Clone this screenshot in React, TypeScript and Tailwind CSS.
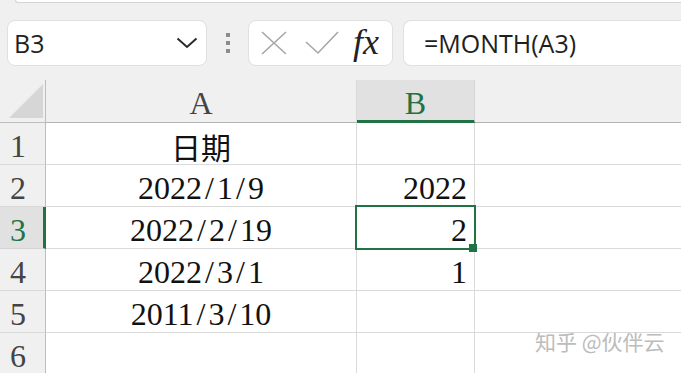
import React from "react";

const serif = { fontFamily: '"Liberation Serif", "Times New Roman", serif' };
const ui = { fontFamily: '"Open Sans", "Noto Sans", sans-serif' };
const cjk = { fontFamily: '"Noto Sans CJK SC", "Noto Sans", sans-serif' };

function DateText({ s }: { s: string }) {
  const parts = s.split("/");
  return (
    <span className="font-['Liberation_Serif',serif]">
      {parts.map((p, i) => (
        <React.Fragment key={i}>
          {i > 0 && <span className="mx-[3px]">/</span>}
          {p}
        </React.Fragment>
      ))}
    </span>
  );
}

const rows: { n: number; a?: React.ReactNode; b?: string }[] = [
  { n: 1, a: <span style={cjk} className="text-[30px] leading-none">日期</span> },
  { n: 2, a: <DateText s="2022/1/9" />, b: "2022" },
  { n: 3, a: <DateText s="2022/2/19" />, b: "2" },
  { n: 4, a: <DateText s="2022/3/1" />, b: "1" },
  { n: 5, a: <DateText s="2011/3/10" /> },
  { n: 6 },
];

export default function App() {
  return (
    <div className="relative w-[681px] h-[373px] overflow-hidden bg-[#f0f0f0] font-['Liberation_Serif',serif]">
      {/* top ribbon edge */}
      <div className="h-[3px] ml-[15px] bg-white border-b border-l border-[#d4d4d4] rounded-bl-[8px]" />

      {/* formula bar */}
      <div className="flex items-center h-[46px] mt-[17px] pl-[7px]" style={ui}>
        <div className="w-[200px] h-[46px] shrink-0 rounded-[8px] bg-white border border-[#e0e0e0] flex items-center justify-between pl-[6px] pr-[8px]">
          <span className="text-[25px] text-[#1f1f1f] leading-none">B3</span>
          <svg width="22" height="12" viewBox="0 0 22 12">
            <path d="M1.5 1.5 L11 10 L20.5 1.5" fill="none" stroke="#2a2a2a" strokeWidth="2" />
          </svg>
        </div>
        <div className="w-[41px] shrink-0 flex flex-col items-center gap-[4px]">
          <div className="w-[4px] h-[4px] bg-[#8c8c8c]" />
          <div className="w-[4px] h-[4px] bg-[#8c8c8c]" />
          <div className="w-[4px] h-[4px] bg-[#8c8c8c]" />
        </div>
        <div className="w-[145px] h-[46px] shrink-0 rounded-[8px] bg-white border border-[#e0e0e0] flex items-center pl-[12px]">
          <svg width="26" height="24" viewBox="0 0 26 24">
            <path d="M1 1 L25 23 M25 1 L1 23" fill="none" stroke="#a6a6a6" strokeWidth="1.6" />
          </svg>
          <svg width="34" height="24" viewBox="0 0 34 24" className="ml-[18px]">
            <path d="M1 11 L13 22 L33 1" fill="none" stroke="#a6a6a6" strokeWidth="1.6" />
          </svg>
          <span className="ml-[14px] text-[36px] italic leading-none text-[#222] -mt-[2px]" style={serif}>
            fx
          </span>
        </div>
        <div className="ml-[10px] flex-1 h-[46px] rounded-l-[8px] bg-white border border-r-0 border-[#e0e0e0] flex items-center pl-[20px]">
          <span className="text-[25px] text-[#1f1f1f] leading-none">=MONTH(A3)</span>
        </div>
      </div>

      {/* column headers */}
      <div className="flex h-[43px] mt-[14px]">
        <div className="w-[46px] shrink-0 border-b border-r border-[#bdbdbd] relative">
          <svg width="46" height="42" viewBox="0 0 46 42" className="absolute left-0 top-0">
            <path d="M9 38 L43 38 L43 4 Z" fill="#d6d6d6" />
          </svg>
        </div>
        <div className="w-[311px] shrink-0 border-b border-r border-b-[#b4b4b4] border-r-[#d9d9d9] flex items-end justify-center pb-[3px]">
          <span className="text-[32px] leading-none text-[#444]">A</span>
        </div>
        <div className="w-[118px] shrink-0 bg-[#e1e1e1] border-b-[3px] border-r border-b-[#217346] border-r-[#d4d4d4] flex items-end justify-center pb-[1px]">
          <span className="text-[32px] leading-none text-[#217346]">B</span>
        </div>
        <div className="flex-1 border-b border-[#b4b4b4]" />
      </div>

      {/* grid rows */}
      {rows.map((r) => (
        <div key={r.n} className="flex h-[42px]">
          <div
            className={
              r.n === 3
                ? "w-[46px] shrink-0 bg-[#e1e1e1] border-b border-b-[#d4d4d4] border-r-[3px] border-r-[#217346] flex items-center pt-[4px]"
                : "w-[46px] shrink-0 border-b border-b-[#d9d9d9] border-r border-r-[#bdbdbd] flex items-center pt-[4px]"
            }
          >
            <span
              className={
                r.n === 3
                  ? "w-[36px] text-center text-[32px] leading-none text-[#217346]"
                  : "w-[36px] text-center text-[32px] leading-none text-[#444]"
              }
            >
              {r.n}
            </span>
          </div>
          <div className="w-[311px] shrink-0 bg-white border-b border-r border-[#dadada] flex items-center justify-center pt-[4px] text-[32px] leading-none text-[#111]">
            {r.a}
          </div>
          <div className="w-[118px] shrink-0 bg-white border-b border-r border-[#dadada] flex items-center justify-end pr-[7px] pt-[4px] text-[32px] leading-none text-[#111]">
            <span className="font-['Liberation_Serif',serif]">{r.b}</span>
          </div>
          <div className="flex-1 bg-white border-b border-[#dadada]" />
        </div>
      ))}

      {/* selection overlay */}
      <div className="absolute left-[355px] top-[205px] w-[121px] h-[45px] border-[2.5px] border-[#217346] pointer-events-none" />
      <div className="absolute left-[469px] top-[244px] w-[8px] h-[8px] bg-[#217346] pointer-events-none" />

      {/* watermark */}
      <div className="absolute left-[535px] top-[331px] text-[21px] leading-none text-[#bcbcbc] whitespace-nowrap" style={cjk}>
        知乎 @伙伴云
      </div>
    </div>
  );
}
